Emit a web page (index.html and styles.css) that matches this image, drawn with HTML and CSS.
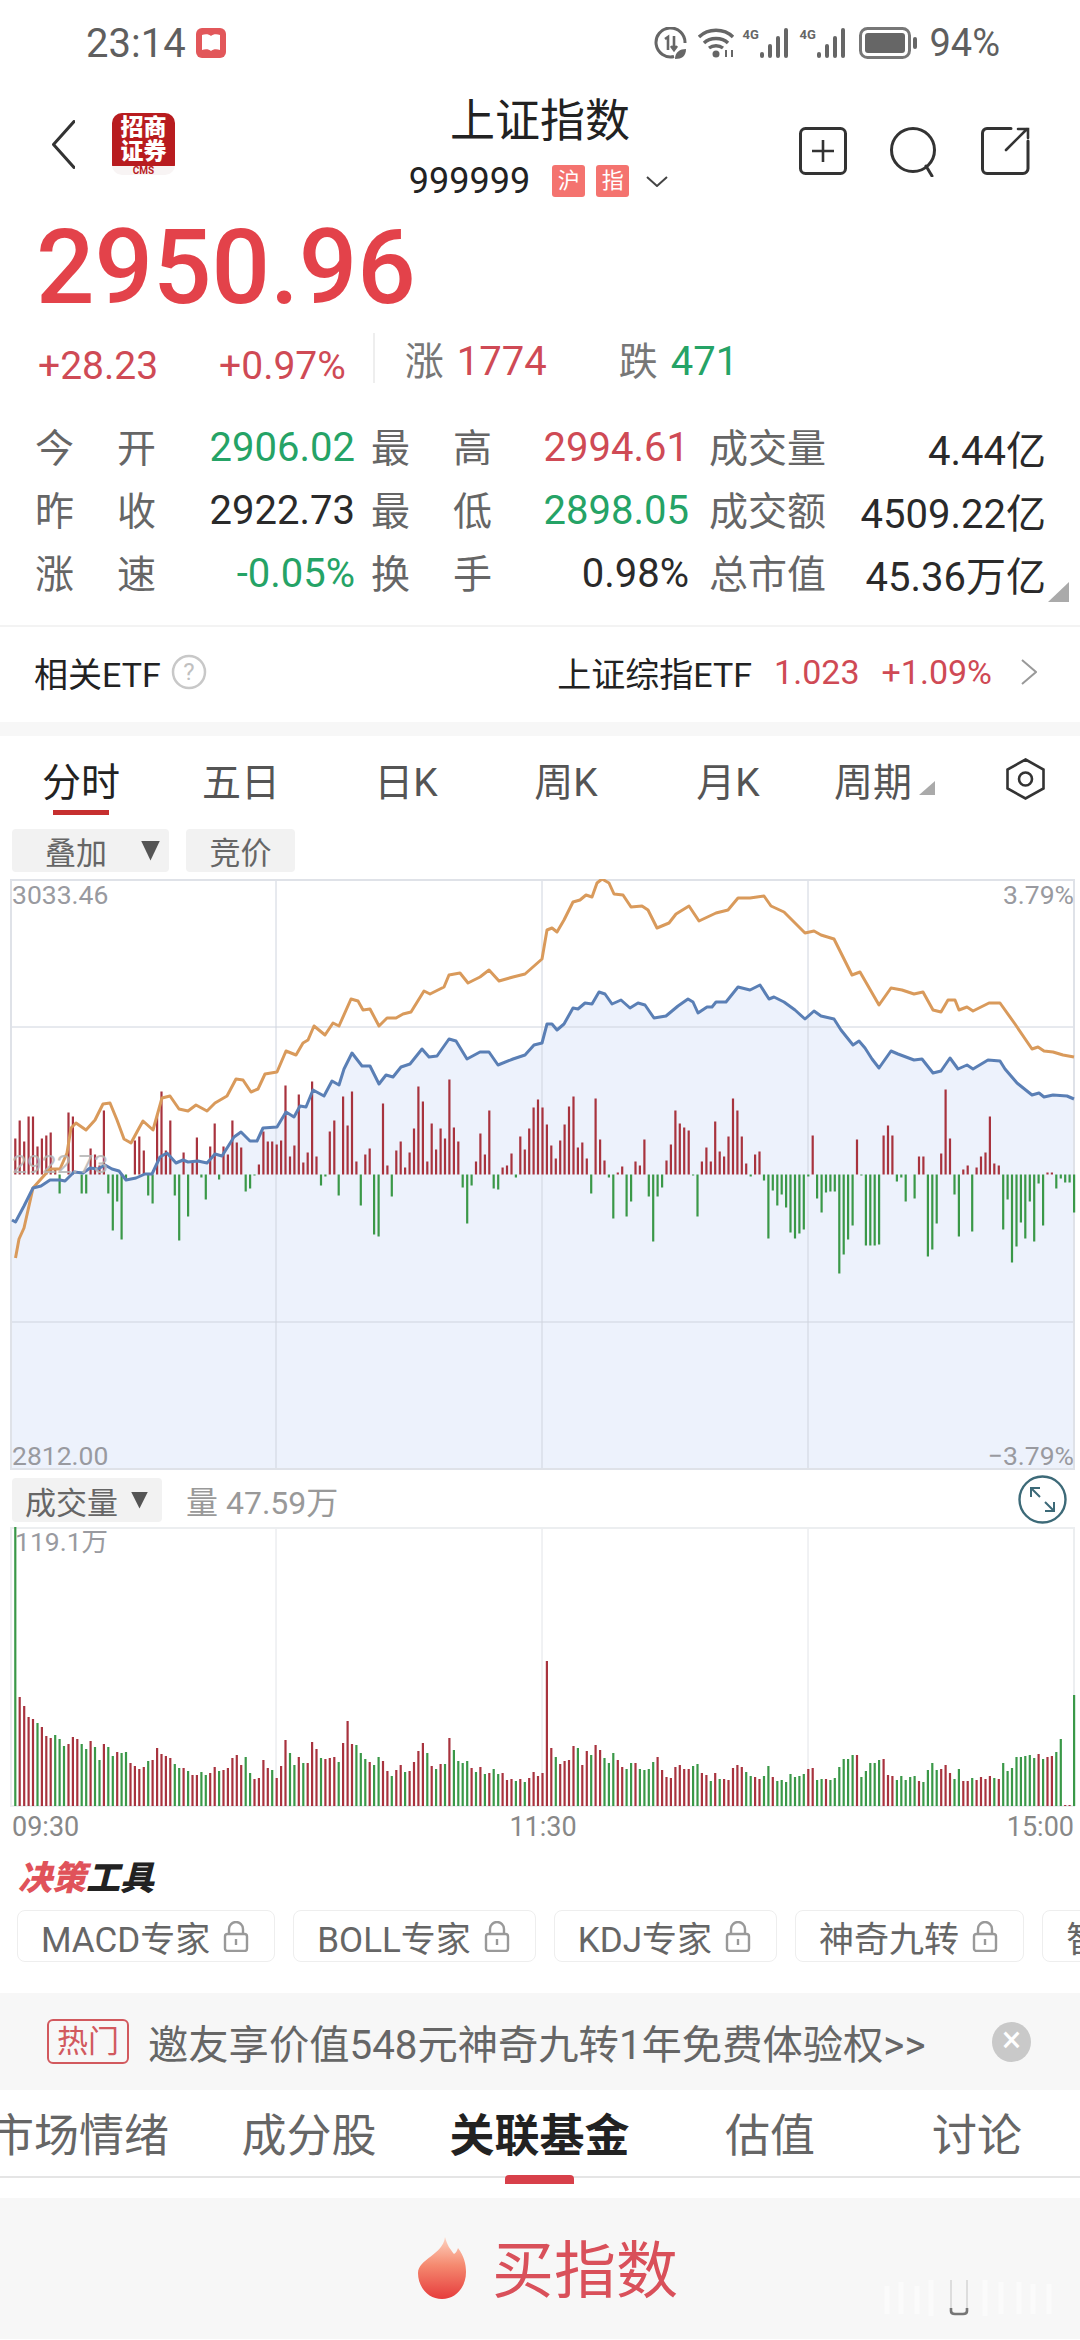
FILE: index.html
```html
<!DOCTYPE html>
<html lang="zh-CN">
<head>
  <meta charset="UTF-8" />
  <meta name="viewport" content="width=device-width, initial-scale=1.0" />
  <title>上证指数</title>
  <link rel="stylesheet" href="styles.css">
</head>
<body>
  <div class="status-bar">
    <div class="status-left">
      <span class="clock">23:14</span>
      <svg class="book-icon" width="30" height="30" viewBox="0 0 30 30"><rect width="30" height="30" rx="6" fill="#e2575a"/><path d="M6 7c3-1 7-1 9 1c2-2 6-2 9-1v15c-3-1-7-1-9 1c-2-2-6-2-9-1z" fill="#fff"/></svg>
    </div>
    <div class="status-right">
      <svg width="33" height="33" viewBox="0 0 33 33" fill="none" stroke="#666" stroke-width="3"><path d="M20 29.5A14.5 14.5 0 1 1 31 16"/><path d="M11 12l3-2v13M20 9v14M17 19l3 4 3-4" stroke-width="2.6"/><path d="M21 32c0-7 5-10 11-10c0 7-4 10-11 10z" fill="#666" stroke="none"/></svg>
      <svg class="wifi" width="37" height="30" viewBox="0 0 37 30" fill="none" stroke="#666" stroke-width="3.4"><path d="M1 9c9-9 25-9 34 0"/><path d="M6 15c6-6 18-6 24 0"/><path d="M11 20c4-3 10-3 14 0"/><circle cx="18" cy="26" r="3.5" fill="#666" stroke="none"/><path d="M28 22v7M34 22v7" stroke-width="2"/></svg>
      <span class="signal"><span class="net">4G</span><span class="bars"><i class="b1"></i><i class="b2"></i><i class="b3"></i><i class="b4"></i></span></span>
      <span class="signal"><span class="net">4G</span><span class="bars"><i class="b1"></i><i class="b2"></i><i class="b3"></i><i class="b4"></i></span></span>
      <svg class="battery" width="58" height="32" viewBox="0 0 58 32"><rect x="1.5" y="1.5" width="49" height="29" rx="7" fill="none" stroke="#777" stroke-width="3"/><rect x="6" y="6" width="40" height="20" rx="3" fill="#666"/><rect x="54" y="10" width="4" height="12" rx="2" fill="#666"/></svg>
      <span class="battery-text">94%</span>
    </div>
  </div>

  <header class="nav">
    <div class="nav-left">
      <svg width="23" height="49" viewBox="0 0 23 49" fill="none" stroke="#333" stroke-width="3" stroke-linecap="round" stroke-linejoin="round"><path d="M22 1.5L1.5 24.5L22 47.5"/></svg>
      <div class="logo">
        <div class="logo-red"><span>招商</span><span>证券</span></div>
        <div class="logo-cms">CMS</div>
      </div>
    </div>
    <div class="nav-center">
      <h1>上证指数</h1>
      <div class="code-row">
        <span class="code">999999</span>
        <span class="code-tag">沪</span>
        <span class="code-tag">指</span>
        <svg width="22" height="11" viewBox="0 0 22 11" fill="none" stroke="#444" stroke-width="2"><path d="M1 1l10 9 10-9"/></svg>
      </div>
    </div>
    <div class="nav-right">
      <svg width="48" height="48" viewBox="0 0 48 48" fill="none" stroke="#333" stroke-width="3"><rect x="1.5" y="1.5" width="45" height="45" rx="5"/><path d="M24 13v22M13 24h22" stroke-width="2.6"/></svg>
      <svg width="50" height="50" viewBox="0 0 50 50" fill="none" stroke="#333" stroke-width="3"><circle cx="24" cy="23" r="21.5"/><path d="M37 39l6 10" stroke-linecap="round"/></svg>
      <svg width="49" height="48" viewBox="0 0 49 48" fill="none" stroke="#333" stroke-width="3" stroke-linecap="round"><path d="M30 1.5H6a4.5 4.5 0 0 0-4.5 4.5v36a4.5 4.5 0 0 0 4.5 4.5h36a5 5 0 0 0 5-5V14"/><path d="M25 23L46 2M37 2h10v9" stroke-width="2.6"/></svg>
    </div>
  </header>

  <div class="price">2950.96</div>

  <div class="quote">
    <span class="change red">+28.23</span>
    <span class="change change-pct red">+0.97%</span>
    <span class="quote-line"></span>
    <span class="breadth">涨</span><span class="breadth-num red">1774</span>
    <span class="breadth breadth-down">跌</span><span class="breadth-num green">471</span>
  </div>

  <div class="stats">
    <span class="stat-label wide">今开</span><span class="stat-value green">2906.02</span>
    <span class="stat-label wide">最高</span><span class="stat-value red">2994.61</span>
    <span class="stat-label">成交量</span><span class="stat-value">4.44亿</span>
    <span class="stat-label wide">昨收</span><span class="stat-value">2922.73</span>
    <span class="stat-label wide">最低</span><span class="stat-value green">2898.05</span>
    <span class="stat-label">成交额</span><span class="stat-value">4509.22亿</span>
    <span class="stat-label wide">涨速</span><span class="stat-value green">-0.05%</span>
    <span class="stat-label wide">换手</span><span class="stat-value">0.98%</span>
    <span class="stat-label">总市值</span><span class="stat-value">45.36万亿</span>
    <span class="corner-mark"></span>
  </div>

  <div class="etf">
    <div class="etf-left">
      <span>相关ETF</span>
      <svg width="36" height="36" viewBox="0 0 36 36"><circle cx="18" cy="18" r="16" fill="none" stroke="#c8c8c8" stroke-width="2.5"/><text x="18" y="26" text-anchor="middle" class="help-mark">?</text></svg>
    </div>
    <div class="etf-right">
      <span>上证综指ETF</span>
      <span class="etf-price red">1.023</span>
      <span class="etf-pct red">+1.09%</span>
      <svg class="etf-arrow" width="16" height="26" viewBox="0 0 16 26" fill="none" stroke="#999" stroke-width="2"><path d="M1 1l14 12L1 25"/></svg>
    </div>
  </div>

  <div class="band"></div>

  <nav class="chart-tabs">
    <span class="chart-tab active">分时</span>
    <span class="chart-tab">五日</span>
    <span class="chart-tab">日K</span>
    <span class="chart-tab">周K</span>
    <span class="chart-tab">月K</span>
    <span class="chart-tab period">周期<i class="period-mark"></i></span>
    <svg class="hex-icon" width="39" height="42" viewBox="0 0 39 42" fill="none" stroke="#333" stroke-width="2.6"><path d="M19.5 1.5L37.5 11.5V30.5L19.5 40.5L1.5 30.5V11.5z"/><circle cx="19.5" cy="21" r="6.5"/></svg>
  </nav>

  <div class="chart-tools">
    <span class="tool-btn overlay">叠加<i class="drop"></i></span>
    <span class="tool-btn auction">竞价</span>
  </div>

  <svg class="price-chart" width="1080" height="591" viewBox="0 880 1080 591">
    <polygon id="blueArea" fill="#edf2fc"/>
    <g class="grid-main">
      <path d="M11 1028H1074M11 1323H1074M276 880V1471M542 880V1471M808 880V1471"/>
    </g>
    <rect class="chart-frame" x="11" y="881" width="1063" height="589"/>
    <path id="flowUp" class="bar-red"/>
    <path id="flowDown" class="bar-green"/>
    <polyline id="orangeLine" class="line-orange"/>
    <polyline id="blueLine" class="line-blue"/>
    <text x="12" y="905" class="axis-text">3033.46</text>
    <text x="12" y="1174" class="axis-text ghost">2922.73</text>
    <text x="12" y="1466" class="axis-text">2812.00</text>
    <text x="1074" y="905" class="axis-text" text-anchor="end">3.79%</text>
    <text x="1074" y="1466" class="axis-text" text-anchor="end">−3.79%</text>
  </svg>

  <div class="volume-head">
    <div class="volume-left">
      <span class="tool-btn volume-btn">成交量<i class="drop"></i></span>
      <span class="volume-text">量 47.59万</span>
    </div>
    <svg width="49" height="49" viewBox="0 0 49 49" fill="none" stroke="#3d6a78" stroke-width="2.4"><circle cx="24.5" cy="24.5" r="23"/><path d="M13 13l9 9M13 22v-9h9M36 36l-9-9M36 27v9h-9" stroke-width="2"/></svg>
  </div>

  <svg class="volume-chart" width="1080" height="280" viewBox="0 1528 1080 280">
    <path class="grid-light" d="M276 1528V1807M542 1528V1807M808 1528V1807"/>
    <rect class="chart-frame light" x="11" y="1529" width="1063" height="278"/>
    <path id="volUp" class="bar-red"/>
    <path id="volDown" class="bar-green"/>
    <text x="15" y="1552" class="axis-text">119.1万</text>
  </svg>

  <div class="time-axis">
    <span>09:30</span>
    <span>11:30</span>
    <span>15:00</span>
  </div>

  <div class="tools-title"><span class="tools-red">决策</span>工具</div>

  <div class="pill-row">
    <span class="pill">MACD专家<svg class="lock"><use href="#lockIcon"/></svg></span>
    <span class="pill">BOLL专家<svg class="lock"><use href="#lockIcon"/></svg></span>
    <span class="pill">KDJ专家<svg class="lock"><use href="#lockIcon"/></svg></span>
    <span class="pill">神奇九转<svg class="lock"><use href="#lockIcon"/></svg></span>
    <span class="pill">智能</span>
  </div>

  <div class="banner">
    <span class="hot-tag">热门</span>
    <span class="banner-text">邀友享价值548元神奇九转1年免费体验权&gt;&gt;</span>
    <span class="banner-close">×</span>
  </div>

  <nav class="main-tabs">
    <span class="main-tab">市场情绪</span>
    <span class="main-tab">成分股</span>
    <span class="main-tab active">关联基金</span>
    <span class="main-tab">估值</span>
    <span class="main-tab">讨论</span>
  </nav>

  <div class="buy-bar">
    <svg width="53" height="62" viewBox="0 0 53 62">
      <defs>
        <linearGradient id="flame" x1="0" y1="0" x2="0" y2="1">
          <stop offset="0" stop-color="#fdd3c0"/>
          <stop offset=".45" stop-color="#f58a70"/>
          <stop offset="1" stop-color="#e63c3c"/>
        </linearGradient>
      </defs>
      <path d="M30 0c2 8 5 12 9 17c2-1 3-3 4-6c6 8 8 16 8 24c0 15-10 27-24 27S3 50 3 36C3 22 28 18 30 0z" fill="url(#flame)"/>
    </svg>
    <span class="buy-text">买指数</span>
    <svg class="watermark" width="173" height="38" viewBox="0 0 173 38" fill="none" stroke="#fff" stroke-width="5" opacity=".6"><path d="M6 8v28M20 4v32M36 8v28M50 2v36M104 2v36M120 4v32M138 4v32M152 6v30M168 6v30"/><path d="M70 2v30M86 2v30" stroke="#ccc" stroke-width="2"/><path d="M70 30v3q0 3 4 3h8q4 0 4-3v-3" stroke="#222" stroke-width="2.6"/></svg>
  </div>

  <svg width="0" height="0" class="defs-holder">
    <symbol id="lockIcon" viewBox="0 0 26 31">
      <path d="M6 13V8a7 7 0 0 1 14 0v5" fill="none" stroke="#999" stroke-width="2.4"/>
      <rect x="2" y="13" width="22" height="17" rx="2.5" fill="none" stroke="#999" stroke-width="2.4"/>
      <path d="M13 18v6" stroke="#999" stroke-width="2.4"/>
    </symbol>
  </svg>

  <script src="chart.js"></script>
</body>
</html>
```

FILE: styles.css
```css
* {
  box-sizing: border-box;
}

html, body {
  margin: 0;
  padding: 0;
}

body {
  width: 1080px;
  height: 2340px;
  overflow: hidden;
  background-color: #fff;
  color: #222;
  font-family: Roboto, "Noto Sans CJK SC", sans-serif;
}

svg {
  display: block;
  flex-shrink: 0;
}

.red {
  color: #cf4a55;
}

.green {
  color: #25a366;
}

/* status bar */
.status-bar {
  height: 86px;
  display: flex;
  justify-content: space-between;
  align-items: center;
  padding: 0 80px 0 86px;
  color: #5f5f5f;
}

.status-left,
.status-right {
  display: flex;
  align-items: center;
}

.clock {
  font-size: 40px;
  margin-right: 10px;
}

.wifi {
  margin-left: 11px;
}

.signal {
  display: flex;
  align-items: flex-start;
  margin-left: 7px;
}

.signal + .signal {
  margin-left: 11px;
}

.net {
  font-size: 13px;
  line-height: 14px;
  font-weight: 700;
  color: #666;
  width: 18px;
}

.bars {
  display: flex;
  align-items: flex-end;
  gap: 4px;
  height: 30px;
}

.bars i {
  display: block;
  width: 4px;
  background-color: #666;
  border-radius: 2px;
}

.bars .b1 { height: 6px; }
.bars .b2 { height: 14px; }
.bars .b3 { height: 22px; }
.bars .b4 { height: 30px; }

.battery {
  margin-left: 14px;
}

.battery-text {
  font-size: 38px;
  margin-left: 12px;
}

/* nav */
.nav {
  height: 124px;
  display: grid;
  grid-template-columns: 1fr auto 1fr;
  align-items: start;
}

.nav-left {
  display: flex;
  align-items: center;
  gap: 37px;
  padding: 27px 0 0 52px;
}

.logo {
  width: 63px;
  height: 62px;
  border-radius: 10px;
  overflow: hidden;
  background-color: #f8f4f4;
}

.logo-red {
  height: 53px;
  background-color: #b81c1f;
  color: #fff;
  font-size: 23px;
  font-weight: 900;
  line-height: 24px;
  display: flex;
  flex-direction: column;
  align-items: center;
  padding-top: 3px;
}

.logo-cms {
  font-size: 10px;
  line-height: 9px;
  font-weight: 700;
  color: #b81c1f;
  text-align: center;
}

.nav-center h1 {
  margin: 6px 0 0;
  font-size: 45px;
  line-height: 60px;
  font-weight: 400;
  text-align: center;
}

.code-row {
  height: 50px;
  margin: 4px 0 0 -3px;
  display: flex;
  align-items: center;
}

.code {
  font-size: 36px;
  margin-right: 22px;
}

.code-tag {
  width: 33px;
  height: 32px;
  line-height: 32px;
  margin-right: 11px;
  text-align: center;
  font-size: 22px;
  color: #fff;
  background-color: #f4736f;
  border-radius: 3px;
}

.code-tag + svg {
  margin-left: 6px;
}

.nav-right {
  display: flex;
  justify-content: flex-end;
  gap: 42px;
  padding: 41px 50px 0 0;
}

/* quote */
.price {
  height: 115px;
  line-height: 115px;
  padding-left: 36px;
  font-size: 103px;
  font-weight: 500;
  color: #e3424a;
}

.quote {
  height: 90px;
  padding: 8px 0 0 38px;
  display: flex;
  align-items: flex-start;
  font-size: 39px;
}

.change {
  line-height: 50px;
  margin-top: 8px;
}

.change-pct {
  margin-left: 61px;
}

.quote-line {
  width: 2px;
  height: 50px;
  margin: 0 30px 0 27px;
  background-color: #eee;
}

.breadth {
  line-height: 50px;
  margin-top: 4px;
  color: #777;
}

.breadth-down {
  margin-left: 72px;
}

.breadth-num {
  line-height: 50px;
  margin: 4px 0 0 13px;
  font-size: 40px;
}

.stats {
  position: relative;
  height: 189px;
  display: grid;
  grid-template-columns: 122px 199px 137px 197px 137px 220px;
  grid-auto-rows: 63px;
  align-items: center;
  padding-left: 34px;
}

.stat-label {
  margin-top: -3px;
  font-size: 39px;
  color: #666;
  justify-self: end;
}

.stat-label.wide {
  width: 121px;
  text-align-last: justify;
}

.stat-value {
  margin-top: 2px;
  font-size: 40px;
  text-align: right;
  color: #2a2a2a;
}

.stat-value.green {
  color: #25a366;
}

.stat-value.red {
  color: #cf4a55;
}

.corner-mark {
  position: absolute;
  right: 11px;
  bottom: 2px;
  width: 21px;
  height: 20px;
  background-color: #aaa;
  clip-path: polygon(100% 0, 100% 100%, 0 100%);
}

/* related etf */
.etf {
  height: 97px;
  margin-top: 21px;
  padding: 0 43px 5px 34px;
  border-top: 2px solid #f3f3f3;
  display: flex;
  justify-content: space-between;
  align-items: center;
  font-size: 34px;
}

.etf-left,
.etf-right {
  display: flex;
  align-items: center;
}

.etf-left svg {
  margin-left: 10px;
}

.help-mark {
  font-size: 24px;
  fill: #c0c0c0;
}

.etf-price {
  margin-left: 22px;
}

.etf-pct {
  margin-left: 22px;
}

.etf-arrow {
  margin-left: 29px;
}

.band {
  height: 14px;
  background-color: #f7f7f7;
}

/* chart tabs */
.chart-tabs {
  height: 93px;
  padding: 0 0 7px 1px;
  display: grid;
  grid-template-columns: 160px 160px 170px 150px 174px 116px 73px 39px;
  align-items: center;
}

.chart-tab {
  position: relative;
  font-size: 39px;
  color: #555;
  text-align: center;
}

.chart-tab.active {
  color: #222;
}

.chart-tab.active::after {
  content: "";
  position: absolute;
  left: 52px;
  bottom: -8px;
  width: 56px;
  height: 5px;
  background-color: #c62f2f;
}

.period-mark {
  position: absolute;
  left: 104px;
  bottom: 12px;
  width: 16px;
  height: 14px;
  background-color: #aaa;
  clip-path: polygon(100% 0, 100% 100%, 0 100%);
}

.hex-icon {
  grid-column: 8;
  margin-left: 2px;
}

.chart-tools {
  height: 50px;
  padding: 0 0 7px 12px;
  display: flex;
  gap: 17px;
}

.tool-btn {
  height: 43px;
  display: flex;
  align-items: center;
  font-size: 31px;
  color: #666;
  background-color: #f2f2f2;
  border-radius: 4px;
}

.overlay {
  width: 157px;
  padding-left: 33px;
}

.auction {
  width: 109px;
  justify-content: center;
}

.drop {
  width: 19px;
  height: 20px;
  margin-left: 34px;
  background-color: #555;
  clip-path: polygon(0 0, 100% 0, 50% 100%);
}

/* charts */
.grid-main path {
  fill: none;
  stroke: #cfd4de;
  stroke-width: 1;
}

.grid-light {
  fill: none;
  stroke: #e2e4e8;
  stroke-width: 1;
}

.chart-frame {
  fill: none;
  stroke: #dfe2e8;
  stroke-width: 2;
}

.chart-frame.light {
  stroke: #eceef0;
}

.bar-red {
  fill: none;
  stroke: #a8333e;
  stroke-width: 2.2;
}

.bar-green {
  fill: none;
  stroke: #3a9848;
  stroke-width: 2.2;
}

.line-orange,
.line-blue {
  fill: none;
  stroke-width: 3;
  stroke-linejoin: round;
}

.line-orange {
  stroke: #d99a5b;
}

.line-blue {
  stroke: #5a7fb5;
}

.axis-text {
  font-size: 26.5px;
  fill: #999aa0;
}

.axis-text.ghost {
  fill: #b5b5b5;
  opacity: .85;
}

.volume-head {
  height: 57px;
  padding: 5px 13px 0 12px;
  display: flex;
  justify-content: space-between;
  align-items: flex-start;
}

.volume-left {
  display: flex;
  align-items: center;
  gap: 24px;
  padding-top: 2px;
}

.volume-btn {
  width: 150px;
  height: 44px;
  padding-left: 13px;
}

.volume-btn .drop {
  width: 17px;
  height: 17px;
  margin-left: 13px;
}

.volume-text {
  font-size: 32px;
  color: #999;
}

.time-axis {
  height: 38px;
  padding: 2px 6px 0 12px;
  display: flex;
  justify-content: space-between;
  align-items: center;
  font-size: 27px;
  color: #888;
}

/* tools */
.tools-title {
  height: 65px;
  line-height: 67px;
  padding-left: 18px;
  font-size: 34px;
  font-weight: 900;
  font-style: italic;
  color: #222;
}

.tools-red {
  color: #e0525a;
}

.pill-row {
  height: 52px;
  padding-left: 17px;
  display: flex;
  gap: 18px;
  overflow: hidden;
}

.pill {
  flex-shrink: 0;
  height: 52px;
  padding: 0 25px 0 23px;
  display: flex;
  align-items: center;
  font-size: 35px;
  color: #666;
  border: 1px solid #eee;
  border-radius: 8px;
  white-space: nowrap;
}

.lock {
  width: 26px;
  height: 31px;
  margin-left: 13px;
}

.defs-holder {
  position: absolute;
}

.banner {
  height: 97px;
  margin-top: 31px;
  padding: 0 49px 0 47px;
  display: flex;
  align-items: center;
  background-color: #f7f7f7;
}

.hot-tag {
  width: 82px;
  height: 45px;
  line-height: 41px;
  text-align: center;
  font-size: 31px;
  color: #d2595e;
  border: 2px solid #d2595e;
  border-radius: 6px;
}

.banner-text {
  flex: 1;
  margin-left: 19px;
  font-size: 40.3px;
  color: #666;
  white-space: nowrap;
}

.banner-close {
  width: 39px;
  height: 40px;
  line-height: 36px;
  text-align: center;
  font-size: 36px;
  color: #fff;
  background-color: #c9c9c9;
  border-radius: 50%;
}

/* bottom tabs */
.main-tabs {
  height: 88px;
  margin-left: -36px;
  width: 1116px;
  display: grid;
  grid-template-columns: 230px 230px 231px 230px 184px;
  border-bottom: 2px solid #e5e5e5;
}

.main-tab {
  position: relative;
  font-size: 45px;
  line-height: 94px;
  color: #666;
  text-align: center;
}

.main-tab.active {
  font-weight: 700;
  color: #222;
}

.main-tab.active::after {
  content: "";
  position: absolute;
  left: 81px;
  bottom: 0;
  width: 69px;
  height: 9px;
  background-color: #d8404a;
  border-radius: 4px 4px 0 0;
}

.buy-bar {
  position: relative;
  height: 141px;
  margin-top: 20px;
  padding: 39px 0 0 415px;
  display: flex;
  gap: 24px;
  background-color: #f7f7f7;
}

.buy-text {
  font-size: 62px;
  line-height: 70px;
  color: #d9505a;
}

.watermark {
  position: absolute;
  left: 881px;
  top: 80px;
}
```

FILE: chart.js
```js
// minute data read off the screen, heights are in px from the baseline.
// positive = red bar, negative = green bar
const flow = [36,54,33,58,58,28,36,39,42,5,-19,0,62,58,0,-19,-19,26,20,9,64,-19,-56,-27,-65,-5,0,34,38,24,
  -21,-29,60,83,24,54,-21,-66,22,-42,13,37,-3,-25,28,51,-5,28,20,54,32,27,-17,-14,-1,10,43,33,33,30,
  34,89,18,29,80,12,22,93,18,-11,-2,43,54,-21,78,49,83,13,-31,20,26,-60,-62,71,9,-22,24,33,7,22,
  46,88,73,13,51,25,46,36,95,47,33,-13,-49,-11,13,41,20,64,-14,-15,7,9,21,-3,38,25,46,67,75,67,
  50,29,16,34,50,68,78,27,32,16,-19,76,35,14,-3,-44,2,8,-42,-27,13,9,35,-22,-67,-22,-13,14,30,64,
  51,47,44,-1,-42,13,27,13,53,23,18,38,76,64,38,11,-2,20,23,-6,-64,-16,-31,-20,-33,-58,-64,-59,-55,-2,
  39,-24,-38,-18,-17,-17,-99,-80,-65,-51,35,-1,-71,-71,-71,-70,39,49,39,-7,-3,-27,0,-24,18,18,-82,-75,-49,21,
  85,36,-20,-62,5,9,-57,7,18,22,58,11,9,-55,-25,-88,-72,-48,-64,-27,-67,-9,-51,2,2,-14,-4,-8,-8,-38];

const vol = [-279,109,100,89,87,-83,79,70,68,-71,-67,-60,62,69,67,-62,-57,65,-59,-46,62,-59,-50,54,-53,-54,43,40,37,39,
  -45,46,58,52,50,48,-42,-38,38,-35,31,31,-34,-31,33,39,-35,36,38,48,51,41,-49,-33,27,28,46,38,-36,28,
  40,66,-53,-41,49,-43,43,64,57,-48,47,48,49,-44,63,85,62,-61,-53,-47,44,-41,-49,45,35,-30,36,41,-34,35,
  44,55,63,-53,40,-37,42,-42,68,-56,-45,-43,-45,38,-34,39,-32,33,-37,-32,33,26,27,-25,27,-24,28,34,30,33,
  145,58,-49,42,45,46,60,-58,41,55,-51,61,56,-48,-43,-53,46,39,-37,-43,43,-37,-36,-37,-44,49,36,29,28,39,
  41,37,37,-40,-42,33,31,-25,33,-27,27,26,38,41,39,-34,-30,29,27,-30,-40,29,-25,-26,-24,-32,-29,-30,-32,37,
  38,-26,-27,27,-26,-28,-39,-47,-47,-51,51,-29,-35,-43,-43,-46,47,31,30,-26,-30,-26,-29,-30,25,-24,-36,-43,-36,37,
  41,33,-27,-37,25,25,-28,26,29,27,30,-28,27,-43,-35,-38,-49,-49,-50,-51,-48,52,-47,49,50,-54,-67,1,1,-111];

const bluePts = "12,1221 15.5,1223 24,1207 33,1189 41,1187 50,1181 60,1181 65,1182 74,1173 83,1174 90,1169 98,1170 105,1166 112,1170 119,1172 126,1181 136,1179 145,1175 152,1175 160,1158 167,1154 176,1164 183,1161 188,1163 198,1162 207,1164 215,1155 222,1157 234,1138 241,1133 250,1142 257,1142 263,1129 277,1128 286,1113 294,1118 300,1107 306,1108 313,1091 324,1097 332,1082 339,1086 344,1070 352,1054 362,1067 370,1067 379,1085 386,1076 393,1078 401,1068 410,1065 422,1050 429,1058 437,1057 449,1040 456,1042 467,1060 480,1053 489,1053 498,1066 513,1060 525,1056 534,1046 542,1044 547,1025 552,1025 557,1031 564,1025 573,1009 578,1010 585,1004 592,1005 599,993 605,995 612,1005 621,1001 630,1009 638,1004 645,1006 654,1019 666,1017 678,1007 688,1000 693,1003 698,1014 707,1008 712,1008 716,1003 726,1003 738,988 750,991 760,986 769,1000 774,998 784,1003 795,1011 805,1020 814,1012 821,1017 834,1020 841,1031 853,1046 859,1042 865,1049 872,1060 879,1069 891,1052 898,1055 914,1061 922,1060 933,1074 941,1072 950,1059 958,1070 967,1066 973,1070 988,1061 1000,1062 1005,1070 1017,1084 1032,1096 1039,1094 1044,1098 1053,1096 1067,1097 1074,1100";

const orangePts = "15.5,1259 19,1240 24,1229 33,1189 41,1180 50,1170 60,1170 67,1154 71,1129 76,1124 86,1131 95,1121 103,1105 110,1104 117,1121 124,1140 131,1144 138,1131 143,1122 153,1131 162,1099 170,1097 179,1110 188,1112 196,1106 207,1112 215,1104 227,1097 236,1080 243,1081 251,1093 258,1090 265,1075 277,1073 286,1052 296,1056 303,1044 308,1041 314,1027 325,1036 333,1024 339,1027 351,1000 358,1002 363,1011 370,1010 379,1027 387,1019 396,1019 403,1015 411,1013 424,992 430,995 444,988 449,976 460,974 468,984 480,978 489,971 499,982 513,978 525,975 542,960 547,931 552,929 557,933 564,921 573,903 580,901 586,896 592,898 597,884 602,880 609,884 614,895 623,896 631,908 642,907 648,911 657,929 669,924 676,915 689,907 699,922 716,914 728,911 738,899 750,899 764,897 771,907 784,913 805,934 814,932 821,936 834,940 852,976 860,973 879,1006 891,989 902,991 914,995 923,993 933,1011 941,1013 948,1001 955,1001 959,1011 967,1008 973,1012 989,1004 1000,1004 1015,1025 1032,1050 1038,1048 1044,1052 1053,1053 1063,1056 1074,1058";

function barX(i) {
  return (15.3 + 4.43 * i).toFixed(1);
}

// builds the "M x y V y" path for the bars of one colour
function barPath(data, baseY, pick) {
  let d = "";
  data.forEach((v, i) => {
    if (pick(v)) d += `M${barX(i)} ${baseY}V${baseY - Math.abs(v)}`;
  });
  return d;
}

// flow bars grow both ways from the zero line
function flowPath(data, baseY, pick) {
  let d = "";
  data.forEach((v, i) => {
    if (v !== 0 && pick(v)) d += `M${barX(i)} ${baseY}V${baseY - v}`;
  });
  return d;
}

const isUp = v => v > 0;
const isDown = v => v < 0;

document.getElementById("flowUp").setAttribute("d", flowPath(flow, 1175.5, isUp));
document.getElementById("flowDown").setAttribute("d", flowPath(flow, 1175.5, isDown));
document.getElementById("volUp").setAttribute("d", barPath(vol, 1807, isUp));
document.getElementById("volDown").setAttribute("d", barPath(vol, 1807, isDown));
document.getElementById("blueLine").setAttribute("points", bluePts);
document.getElementById("orangeLine").setAttribute("points", orangePts);
document.getElementById("blueArea").setAttribute("points", `${bluePts} 1074,1471 12,1471`);
```
